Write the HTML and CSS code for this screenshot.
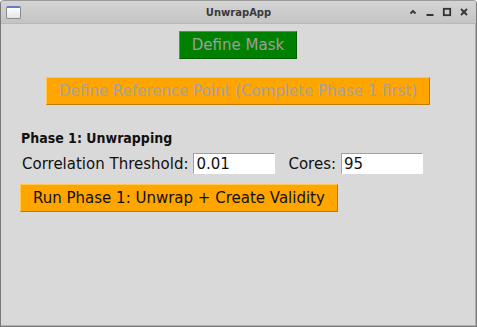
FILE: index.html
```html
<!DOCTYPE html>
<html lang="en">
<head>
    <meta charset="UTF-8">
    <title>UnwrapApp</title>
    <link rel="stylesheet" href="styles.css">
</head>
<body>
    <div class="window">
        <div class="titlebar">
            <span class="app-icon"></span>
            <span class="title">UnwrapApp</span>
            <div class="controls">
                <svg width="10" height="10" viewBox="0 0 10 10"><path d="M2.5 6.5 L5 4 L7.5 6.5" fill="none" stroke="#333" stroke-width="1.8"/></svg>
                <svg width="10" height="10" viewBox="0 0 10 10"><path d="M1.5 8 H8.5" stroke="#333" stroke-width="1.8"/></svg>
                <svg width="10" height="10" viewBox="0 0 10 10"><rect x="1.8" y="1.8" width="6.4" height="6.4" fill="none" stroke="#333" stroke-width="1.8"/></svg>
                <svg width="10" height="10" viewBox="0 0 10 10"><path d="M2 2 L8 8 M8 2 L2 8" stroke="#333" stroke-width="1.8"/></svg>
            </div>
        </div>
        <div class="content">
            <div class="center-row">
                <button class="btn btn-green">Define Mask</button>
            </div>
            <div class="center-row ref-row">
                <button class="btn btn-orange btn-disabled">Define Reference Point (Complete Phase 1 first)</button>
            </div>
            <h2 class="section">Phase 1: Unwrapping</h2>
            <div class="field-row">
                <label>Correlation Threshold:</label>
                <input class="entry" type="text" value="0.01">
                <label class="cores">Cores:</label>
                <input class="entry" type="text" value="95">
            </div>
            <div class="run-row">
                <button class="btn btn-orange">Run Phase 1: Unwrap + Create Validity</button>
            </div>
        </div>
    </div>
</body>
</html>
```

FILE: styles.css
```css
body{margin: 0; font-family: "DejaVu Sans", sans-serif; background: #fff;}
.window{width: 477px; height: 327px; box-sizing: border-box; border: 1px solid #7a7a7a; border-top-color: #9a9a9a; border-radius: 4px 4px 0 0; background: #d9d9d9; display: flex; flex-direction: column; overflow: hidden; box-shadow: inset -1px -1px 0 #b0b0b0;}
.titlebar{height: 22px; flex: none; display: flex; align-items: center; position: relative; background: linear-gradient(#d4d4d4, #c4c4c4); border-bottom: 1px solid #b8b8b8;}
.app-icon{width: 13px; height: 10px; margin-left: 5px; border: 1px solid #8a8a8a; border-radius: 2px; border-top: 2px solid #5a7fc8; background: linear-gradient(#ffffff, #e4e4e4);}
.title{position: absolute; left: 0; right: 0; text-align: center; font-size: 10px; font-weight: bold; color: #3a3a3a; pointer-events: none;}
.controls{margin-left: auto; display: flex; gap: 7px; margin-right: 7px; align-items: center;}
.controls svg{display: block;}
.content{flex: 1; padding: 7px 20px 0 19px; display: flex; flex-direction: column;}
.center-row{display: flex; justify-content: center;}
.ref-row{margin-top: 18px;}
.btn{font-family: "DejaVu Sans", sans-serif; font-size: 15px; height: 28px; padding: 0 12px; border: 1px solid; cursor: pointer;}
.btn-green{background: #008000; color: #9e9e9e; border-color: #3aa83a #005a00 #005a00 #3aa83a;}
.btn-orange{background: #ffa500; color: #111; border-color: #ffc850 #c07a00 #c07a00 #ffc850;}
.btn-disabled{color: #a3a3a3;}
.section{font-family: "DejaVu Sans Condensed", "DejaVu Sans", sans-serif; font-stretch: condensed; font-size: 14px; font-weight: bold; margin: 25px 0 0 1px; color: #111;}
.field-row{display: flex; align-items: center; margin-top: 7px; font-size: 15px; color: #111;}
.field-row label{margin-left: 2px;}
.entry{width: 82px; height: 21px; box-sizing: border-box; margin-left: 5px; padding: 0 2px; border: 1px solid; border-color: #a0a0a0 #ffffff #ffffff #a0a0a0; background: #fff; font-family: "DejaVu Sans", sans-serif; font-size: 15px; color: #111;}
.cores{margin-left: 13px !important;}
.run-row{margin-top: 10px;}
```
